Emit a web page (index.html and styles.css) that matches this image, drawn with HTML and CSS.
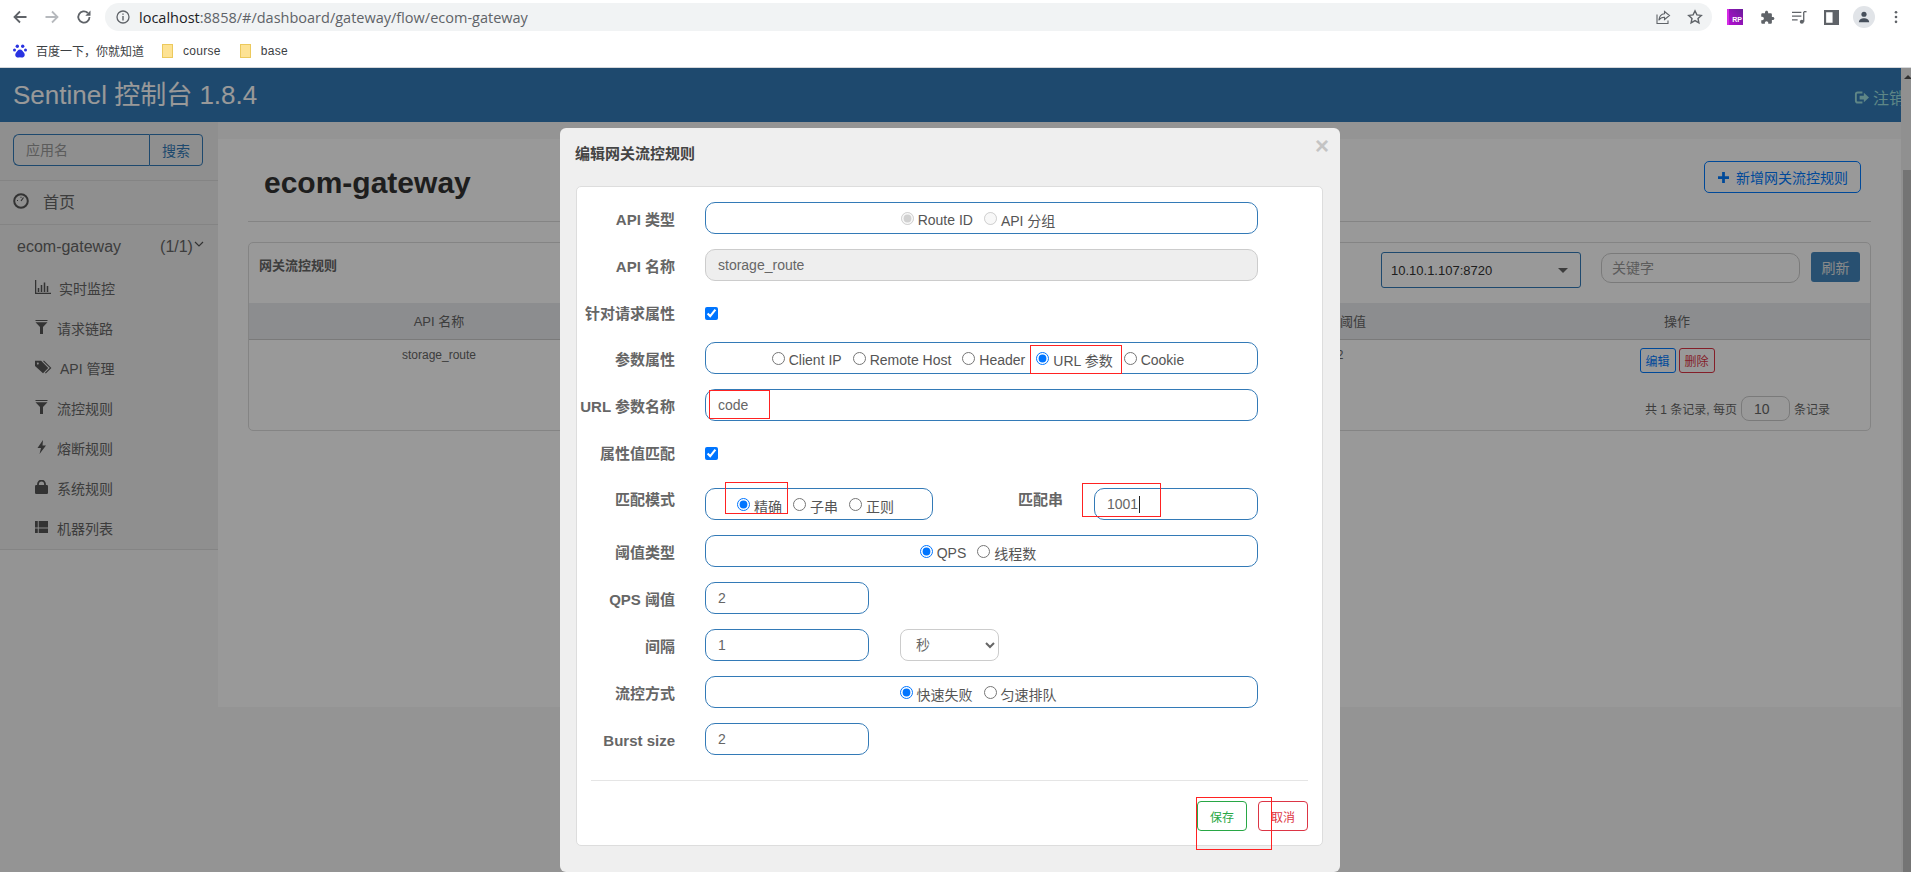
FILE: index.html
```html
<!DOCTYPE html>
<html lang="en">
<head>
    <meta charset="UTF-8">
    <title>Sentinel 控制台</title>
    <link rel="stylesheet" href="styles.css">
</head>
<body>
    <!-- Browser toolbar -->
    <div class="toolbar">
        <svg class="nav-icon" viewBox="0 0 16 16"><path d="M14.5 8H2.5M8 2.5L2.5 8 8 13.5" fill="none" stroke="#5f6368" stroke-width="1.8"/></svg>
        <svg class="nav-icon" viewBox="0 0 16 16"><path d="M1.5 8h12M8 2.5L13.5 8 8 13.5" fill="none" stroke="#b6b9bd" stroke-width="1.8"/></svg>
        <svg class="nav-icon" viewBox="0 0 16 16"><path d="M13.5 8A5.6 5.6 0 1 1 11.8 4" fill="none" stroke="#5f6368" stroke-width="1.8"/><path d="M14.5 1.5v5.2H9.3z" fill="#5f6368"/></svg>
        <div class="address-bar">
            <svg class="info-icon" viewBox="0 0 14 14"><circle cx="7" cy="7" r="6" fill="none" stroke="#5f6368" stroke-width="1.3"/><path d="M6.3 6h1.4v4.5H6.3zM6.3 3.4h1.4v1.4H6.3z" fill="#5f6368"/></svg>
            <span class="url"><span class="url-host">localhost</span>:8858/#/dashboard/gateway/flow/ecom-gateway</span>
            <svg class="bar-icon share-icon" viewBox="0 0 16 16"><path d="M2 5.500v9h11v-3M9.500 2.500l5 4-5 4V8.300C6.500 8.200 5 9.300 3.800 11.200 4.200 7.600 6 5 9.500 4.700z" fill="none" stroke="#5f6368" stroke-width="1.1"/></svg>
            <svg class="bar-icon" viewBox="0 0 16 16"><path d="M8 1.800l1.900 4.100 4.400.5-3.300 3 .9 4.500L8 11.600l-3.900 2.300.9-4.500-3.300-3 4.400-.5z" fill="none" stroke="#5f6368" stroke-width="1.4"/></svg>
        </div>
        <div class="ext-rp"><span>RP</span></div>
        <svg class="ext-icon" viewBox="0 0 24 24"><path d="M20.500 11H19V7c0-1.100-.9-2-2-2h-4V3.500C13 2.120 11.880 1 10.500 1S8 2.120 8 3.500V5H4c-1.100 0-1.990.9-1.990 2v3.800H3.500c1.490 0 2.700 1.210 2.700 2.700s-1.210 2.700-2.700 2.700H2V20c0 1.100.9 2 2 2h3.800v-1.500c0-1.490 1.210-2.700 2.700-2.700 1.490 0 2.700 1.210 2.700 2.700V22H17c1.100 0 2-.9 2-2v-4h1.500c1.380 0 2.500-1.120 2.500-2.500S21.880 11 20.500 11z" fill="#5f6368"/></svg>
        <svg class="ext-icon" viewBox="0 0 16 16"><path d="M0 2.500h10M0 6.500h10M0 10.500h6" stroke="#5f6368" stroke-width="1.300"/><path d="M12.500 2v10.500" stroke="#5f6368" stroke-width="1.400"/><path d="M12.500 1.800h3" stroke="#5f6368" stroke-width="1.400"/><circle cx="10.500" cy="12.500" r="2.200" fill="#5f6368"/></svg>
        <svg class="ext-icon" viewBox="0 0 14 14"><path d="M0 0h14v14H0zM2 2v10h6V2z" fill="#5f6368" fill-rule="evenodd"/></svg>
        <div class="avatar"><svg viewBox="0 0 14 14"><circle cx="7" cy="3.800" r="3" fill="#47505c"/><path d="M1 13c0-3 3-4.500 6-4.500s6 1.500 6 4.500z" fill="#47505c"/></svg></div>
        <svg class="dots" viewBox="0 0 4 16"><circle cx="2" cy="2.500" r="1.500" fill="#5f6368"/><circle cx="2" cy="8" r="1.500" fill="#5f6368"/><circle cx="2" cy="13.500" r="1.500" fill="#5f6368"/></svg>
    </div>

    <!-- Bookmarks -->
    <div class="bookmarks">
        <svg class="baidu-icon" viewBox="0 0 14 14"><circle cx="4.300" cy="2.300" r="1.700" fill="#2932e1"/><circle cx="9.700" cy="2.300" r="1.700" fill="#2932e1"/><circle cx="1.500" cy="6" r="1.500" fill="#2932e1"/><circle cx="12.500" cy="6" r="1.500" fill="#2932e1"/><path d="M7 5.500c2 0 2.500 1.500 4 3.200 1.500 2 .6 4.800-2 4.800-.8 0-1.300-.3-2-.3s-1.200.3-2 .3c-2.600 0-3.500-2.800-2-4.800C4.500 7 5 5.500 7 5.500z" fill="#2932e1"/></svg>
        <span class="bookmark-text baidu-text">百度一下，你就知道</span>
        <span class="folder"></span><span class="bookmark-text course-text">course</span>
        <span class="folder"></span><span class="bookmark-text">base</span>
    </div>

    <div class="page">
        <div class="app">
            <div class="navbar">
                <span class="brand">Sentinel 控制台 1.8.4</span>
                <span class="logout">
                    <svg class="logout-icon" viewBox="0 0 16 16"><path d="M9 1.500H4a3 3 0 0 0-3 3v7a3 3 0 0 0 3 3h5v-2.200H4a1 1 0 0 1-1-1V4.700a1 1 0 0 1 1-1h5z" fill="#9fe0e0"/><path d="M6 6h4.500V3L16 8l-5.500 5v-3H6z" fill="#9fe0e0"/></svg>注销
                </span>
            </div>
            <div class="layout">
                <div class="sidebar">
                    <div class="search-group">
                        <input class="search-input" type="text" placeholder="应用名">
                        <button class="search-btn">搜索</button>
                    </div>
                    <div class="home-link">
                        <svg class="home-icon" viewBox="0 0 16 16"><circle cx="8" cy="8" r="6.800" fill="none" stroke="#555" stroke-width="2"/><path d="M8 8l2.500-3.500M4 7.500h1M8 3.800v1" stroke="#555" stroke-width="1.200"/></svg>
                        <span>首页</span>
                    </div>
                    <div class="app-title">
                        <span>ecom-gateway</span>
                        <span class="app-count">(1/1)</span>
                        <svg class="chevron" viewBox="0 0 10 6"><path d="M1 1l4 4 4-4" fill="none" stroke="#555" stroke-width="1.200"/></svg>
                    </div>
                    <ul class="menu">
                        <li>
                            <svg class="menu-icon" viewBox="0 0 16 14"><path d="M.5 0v13.500H16M3.500 8v4M6.500 5v7M9.500 2.500V12M12.500 6v6" fill="none" stroke="#555" stroke-width="1.500"/></svg>
                            <span>实时监控</span>
                        </li>
                        <li>
                            <svg class="menu-icon funnel" viewBox="0 0 12 14"><path d="M0 0h12v1H0zM0 2.200h12L7.500 7v7h-3V7z" fill="#555"/></svg>
                            <span>请求链路</span>
                        </li>
                        <li>
                            <svg class="menu-icon tags-icon" viewBox="0 0 18 14"><path d="M0 .5h6.500L14 8l-5.500 5.500L0 6zM3 2.300a1 1 0 1 0 .01 0z" fill="#555" fill-rule="evenodd"/><path d="M9 .5l7.500 7.500-5.500 5.500" fill="none" stroke="#555" stroke-width="1.200"/></svg>
                            <span>API 管理</span>
                        </li>
                        <li>
                            <svg class="menu-icon funnel" viewBox="0 0 12 14"><path d="M0 0h12v1H0zM0 2.200h12L7.500 7v7h-3V7z" fill="#555"/></svg>
                            <span>流控规则</span>
                        </li>
                        <li>
                            <svg class="menu-icon funnel" viewBox="0 0 12 14"><path d="M7.500 0L2 8h3.500L4 14l6.500-8.500H7z" fill="#555"/></svg>
                            <span>熔断规则</span>
                        </li>
                        <li>
                            <svg class="menu-icon funnel" viewBox="0 0 13 14"><path d="M3 6V4a3.500 3.500 0 0 1 7 0v2" fill="none" stroke="#555" stroke-width="1.800"/><rect y="5" width="13" height="9" rx="1.200" fill="#555"/></svg>
                            <span>系统规则</span>
                        </li>
                        <li>
                            <svg class="menu-icon funnel" viewBox="0 0 14 13"><path d="M0 0h3v7H0zM4 0h10v7H4zM0 8h3v5H0zM4 8h10v5H4z" fill="#555"/></svg>
                            <span>机器列表</span>
                        </li>
                    </ul>
                </div>
                <div class="main">
                    <div class="main-header">
                        <h1>ecom-gateway</h1>
                        <button class="add-btn">
                            <svg class="plus-icon" viewBox="0 0 12 12"><path d="M4.500 0h3v4.500H12v3H7.500V12h-3V7.500H0v-3h4.500z" fill="#007bff"/></svg>
                            新增网关流控规则
                        </button>
                    </div>
                    <div class="panel">
                        <div class="panel-head">
                            <span class="panel-title">网关流控规则</span>
                            <div class="machine-select"><span>10.10.1.107:8720</span><span class="select-caret"></span></div>
                            <input class="keyword-input" type="text" placeholder="关键字">
                            <button class="refresh-btn">刷新</button>
                        </div>
                        <table class="rule-table">
                            <colgroup>
                                <col class="col-name"><col class="col-type"><col class="col-type"><col class="col-count"><col class="col-ops">
                            </colgroup>
                            <thead>
                                <tr><th>API 名称</th><th></th><th></th><th>单机阈值</th><th>操作</th></tr>
                            </thead>
                            <tbody>
                                <tr>
                                    <td>storage_route</td><td></td><td></td><td>2</td>
                                    <td><button class="mini-btn edit-btn">编辑</button><button class="mini-btn del-btn">删除</button></td>
                                </tr>
                            </tbody>
                        </table>
                        <div class="pager">
                            <span>共 1 条记录, 每页</span>
                            <input class="page-size" type="text" value="10">
                            <span>条记录</span>
                        </div>
                    </div>
                </div>
            </div>
        </div>
        <div class="scrollbar">
            <span class="scroll-arrow"></span>
            <div class="scroll-thumb"></div>
        </div>

        <div class="backdrop"></div>

        <!-- Edit dialog -->
        <div class="modal">
            <div class="modal-head">
                <span class="modal-title">编辑网关流控规则</span>
                <span class="modal-close">×</span>
            </div>
            <div class="modal-card">
                <form class="rule-form">
                    <div class="form-row">
                        <label class="field-label">API 类型</label>
                        <div class="radio-box full">
                            <label class="radio"><input type="radio" name="r1" checked disabled>Route ID</label>
                            <label class="radio"><input type="radio" name="r1" disabled>API 分组</label>
                        </div>
                    </div>
                    <div class="form-row">
                        <label class="field-label">API 名称</label>
                        <input class="text-input full" type="text" value="storage_route" disabled>
                    </div>
                    <div class="form-row check-row">
                        <label class="field-label">针对请求属性</label>
                        <input class="check" type="checkbox" checked>
                    </div>
                    <div class="form-row">
                        <label class="field-label">参数属性</label>
                        <div class="radio-box full">
                            <label class="radio"><input type="radio" name="r2">Client IP</label>
                            <label class="radio"><input type="radio" name="r2">Remote Host</label>
                            <label class="radio"><input type="radio" name="r2">Header</label>
                            <label class="radio"><input type="radio" name="r2" checked>URL 参数</label>
                            <label class="radio"><input type="radio" name="r2">Cookie</label>
                        </div>
                    </div>
                    <div class="form-row">
                        <label class="field-label">URL 参数名称</label>
                        <input class="text-input full" type="text" value="code">
                    </div>
                    <div class="form-row check-row">
                        <label class="field-label">属性值匹配</label>
                        <input class="check" type="checkbox" checked>
                    </div>
                    <div class="form-row match-row">
                        <label class="field-label">匹配模式</label>
                        <div class="radio-box match-mode">
                            <label class="radio"><input type="radio" name="r3" checked>精确</label>
                            <label class="radio"><input type="radio" name="r3">子串</label>
                            <label class="radio"><input type="radio" name="r3">正则</label>
                        </div>
                        <label class="field-label match-label">匹配串</label>
                        <div class="text-input short caret-input">1001<span class="text-caret"></span></div>
                    </div>
                    <div class="form-row">
                        <label class="field-label">阈值类型</label>
                        <div class="radio-box full">
                            <label class="radio"><input type="radio" name="r4" checked>QPS</label>
                            <label class="radio"><input type="radio" name="r4">线程数</label>
                        </div>
                    </div>
                    <div class="form-row">
                        <label class="field-label">QPS 阈值</label>
                        <input class="text-input short" type="text" value="2">
                    </div>
                    <div class="form-row">
                        <label class="field-label">间隔</label>
                        <input class="text-input short" type="text" value="1">
                        <select class="unit-select"><option>秒</option><option>分</option></select>
                    </div>
                    <div class="form-row">
                        <label class="field-label">流控方式</label>
                        <div class="radio-box full">
                            <label class="radio"><input type="radio" name="r5" checked>快速失败</label>
                            <label class="radio"><input type="radio" name="r5">匀速排队</label>
                        </div>
                    </div>
                    <div class="form-row">
                        <label class="field-label">Burst size</label>
                        <input class="text-input short" type="text" value="2">
                    </div>
                </form>
                <div class="modal-foot">
                    <button class="foot-btn save-btn">保存</button>
                    <button class="foot-btn cancel-btn">取消</button>
                </div>
            </div>
        </div>

        <!-- Red annotation boxes drawn over the screenshot -->
        <div class="mark mark-url"></div>
        <div class="mark mark-code"></div>
        <div class="mark mark-exact"></div>
        <div class="mark mark-value"></div>
        <div class="mark mark-save"></div>
    </div>
</body>
</html>
```

FILE: styles.css
```css
* {
    box-sizing: border-box;
}
html, body {
    height: 100%;
}
body {
    margin: 0;
    height: 872px;
    overflow: hidden;
    background: #fff;
    font-family: "Liberation Sans", "Noto Sans CJK SC", sans-serif;
    font-size: 14px;
    color: #666;
}
button, input, select {
    font-family: inherit;
}

/* browser chrome */
.toolbar {
    display: flex;
    align-items: center;
    height: 34px;
    padding-left: 12px;
}
.nav-icon {
    width: 16px;
    height: 16px;
    margin-right: 16px;
}
.address-bar {
    display: flex;
    align-items: center;
    width: 1607px;
    height: 28px;
    margin-left: -3px;
    padding: 0 9px 0 11px;
    background: #f1f3f4;
    border-radius: 14px;
}
.info-icon {
    width: 14px;
    height: 14px;
    margin-right: 9px;
}
.url {
    flex: 1;
    font-family: "Open Sans", sans-serif;
    font-size: 14.5px;
    color: #5f6368;
}
.url-host {
    color: #202124;
}
.bar-icon {
    width: 16px;
    height: 16px;
}
.share-icon {
    margin-right: 16px;
}
.ext-rp {
    display: flex;
    align-items: flex-end;
    justify-content: flex-end;
    width: 16px;
    height: 16px;
    margin-left: 15px;
    padding-right: 1px;
    background: linear-gradient(45deg, #b40fd0, #6a1b9a);
    border-left: 2px solid #d62ae6;
    color: #fff;
    font-size: 7px;
    font-weight: bold;
    line-height: 10px;
}
.ext-icon {
    width: 15px;
    height: 15px;
    margin-left: 17px;
}
.avatar {
    display: flex;
    align-items: center;
    justify-content: center;
    width: 22px;
    height: 22px;
    margin-left: 14px;
    background: #e1e4e8;
    border-radius: 50%;
}
.avatar svg {
    width: 12px;
    height: 12px;
}
.dots {
    width: 4px;
    height: 14px;
    margin-left: 19px;
}
.bookmarks {
    display: flex;
    align-items: center;
    height: 34px;
    padding-left: 13px;
    border-bottom: 1px solid #d5d7da;
}
.baidu-icon {
    width: 14px;
    height: 14px;
    margin-right: 9px;
}
.bookmark-text {
    font-size: 12px;
    color: #3c4043;
    letter-spacing: .3px;
}
.baidu-text {
    letter-spacing: 0;
    margin-right: 18px;
}
.course-text {
    margin-right: 19px;
}
.folder {
    width: 11px;
    height: 14px;
    margin-right: 10px;
    background: #fde293;
    border: 1px solid #ecc95c;
}

/* dashboard underneath the dialog */
.page {
    position: relative;
    display: flex;
    height: 804px;
    overflow: hidden;
    background: #f7f7f7;
}
.app {
    flex: 1;
    min-width: 0;
}
.navbar {
    position: relative;
    display: flex;
    align-items: center;
    justify-content: space-between;
    height: 54px;
    padding-left: 13px;
    background: #337ab7;
    overflow: hidden;
}
.brand {
    margin-top: -5px;
    font-size: 26px;
    color: #fff;
}
.logout {
    display: flex;
    align-items: center;
    flex-shrink: 0;
    width: 47px;
    margin-top: 4px;
    font-size: 16px;
    color: #9fe0e0;
    white-space: nowrap;
}
.logout-icon {
    width: 15px;
    height: 15px;
    margin-right: 4px;
    flex-shrink: 0;
}
.layout {
    display: flex;
    align-items: flex-start;
}
.sidebar {
    width: 218px;
    height: 428px;
    background: #eee;
    border-bottom: 1px solid #ddd;
}
.search-group {
    display: flex;
    height: 59px;
    padding: 12px 15px 15px 13px;
    border-bottom: 1px solid #ddd;
}
.search-input {
    width: 136px;
    height: 32px;
    padding: 0 12px;
    background: transparent;
    border: 1px solid #337ab7;
    border-right: 0;
    border-radius: 6px 0 0 6px;
    font-size: 14px;
}
.search-input::placeholder {
    color: #999;
}
.search-btn {
    width: 54px;
    height: 32px;
    padding: 0;
    background: transparent;
    border: 1px solid #337ab7;
    border-radius: 0 4px 4px 0;
    font-size: 14px;
    color: #337ab7;
}
.home-link {
    display: flex;
    align-items: center;
    height: 44px;
    padding: 0 0 3px 13px;
    border-bottom: 1px solid #ddd;
    font-size: 16px;
}
.home-icon {
    width: 16px;
    height: 16px;
    margin-right: 14px;
}
.app-title {
    display: flex;
    align-items: center;
    height: 43px;
    padding-left: 17px;
    font-size: 16px;
}
.app-count {
    margin-left: 39px;
}
.chevron {
    width: 10px;
    height: 6px;
    margin: -5px 0 0 1px;
}
.menu {
    list-style: none;
    margin: 0;
    padding: 0;
}
.menu li {
    display: flex;
    align-items: center;
    height: 40px;
    padding-left: 35px;
}
.menu-icon {
    width: 16px;
    height: 14px;
    margin: -3px 8px 0 0;
}
.funnel {
    width: 13px;
    margin-right: 9px;
}
.tags-icon {
    width: 17px;
    margin-right: 8px;
}
.main {
    flex: 1;
    height: 568px;
    margin-top: 17px;
    padding: 0 30px;
    background: #fff;
}
.main-header {
    display: flex;
    justify-content: space-between;
    height: 83px;
    border-bottom: 1px solid #ddd;
}
.main-header h1 {
    margin: 26px 0 0 16px;
    font-size: 30px;
    line-height: 36px;
    color: #333;
}
.add-btn {
    display: flex;
    align-items: center;
    height: 32px;
    margin: 22px 10px 0 0;
    width: 157px;
    padding: 0 12px 0 13px;
    background: transparent;
    border: 1px solid #007bff;
    border-radius: 5px;
    font-size: 14px;
    color: #007bff;
    white-space: nowrap;
}
.plus-icon {
    width: 11px;
    height: 11px;
    margin-right: 7px;
    flex-shrink: 0;
}
.panel {
    margin-top: 20px;
    height: 189px;
    border: 1px solid #ddd;
    border-radius: 5px;
}
.panel-head {
    display: flex;
    align-items: flex-start;
    height: 60px;
    padding: 9px 10px 0 10px;
}
.panel-title {
    margin: 3px auto 0 0;
    font-size: 13px;
    font-weight: bold;
}
.machine-select {
    display: flex;
    align-items: center;
    justify-content: space-between;
    width: 200px;
    height: 36px;
    padding: 0 12px 0 9px;
    border: 1px solid #337ab7;
    border-radius: 3px;
    font-size: 13px;
    color: #333;
}
.select-caret {
    width: 0;
    height: 0;
    border-left: 5px solid transparent;
    border-right: 5px solid transparent;
    border-top: 5px solid #666;
}
.keyword-input {
    width: 199px;
    height: 30px;
    margin: 1px 11px 0 20px;
    padding: 0 10px;
    background: transparent;
    border: 1px solid #ccc;
    border-radius: 10px;
    font-size: 14px;
}
.keyword-input::placeholder {
    color: #999;
}
.refresh-btn {
    width: 49px;
    height: 30px;
    padding: 0;
    background: #4486bd;
    border: 0;
    border-radius: 3px;
    font-size: 14px;
    color: #e6e6e6;
}
.rule-table {
    width: 1621px;
    table-layout: fixed;
    border-collapse: collapse;
}
.col-name { width: 380px; }
.col-type { width: 283.5px; }
.col-count { width: 288px; }
.col-ops { width: 386px; }
.rule-table th {
    height: 36px;
    padding: 0;
    background: #e9ebee;
    border-bottom: 1px solid #ccc;
    font-size: 13px;
    font-weight: normal;
}
.rule-table td {
    height: 41px;
    padding: 8px 0 0;
    vertical-align: top;
    text-align: center;
    font-size: 12px;
}
.mini-btn {
    width: 36px;
    height: 25px;
    margin-right: 3px;
    padding: 0;
    background: transparent;
    border: 1px solid;
    border-radius: 3px;
    font-size: 12px;
}
.edit-btn {
    color: #007bff;
}
.del-btn {
    margin-right: 0;
    color: #dc3545;
}
.pager {
    display: flex;
    justify-content: flex-end;
    align-items: center;
    height: 25px;
    margin: 16px 40px 0 0;
    font-size: 12px;
}
.page-size {
    width: 49px;
    height: 25px;
    margin: 0 4px;
    padding: 0 12px;
    background: transparent;
    border: 1px solid #ccc;
    border-radius: 8px;
    font-size: 14px;
    color: #666;
}
.scrollbar {
    position: relative;
    width: 10px;
    background: #f1f1f1;
}
.scroll-arrow {
    display: block;
    width: 0;
    margin: 7px 0 0 3px;
    border-left: 4px solid transparent;
    border-right: 4px solid transparent;
    border-bottom: 4px solid #505050;
}
.scroll-thumb {
    width: 8px;
    height: 800px;
    margin: 91px 0 0 2px;
    background: #c1c1c1;
}
.backdrop {
    position: absolute;
    inset: 0;
    background: rgba(0, 0, 0, .4);
}

/* dialog */
.modal {
    position: absolute;
    left: 560px;
    top: 60px;
    width: 780px;
    height: 744px;
    padding: 0 17px 0 16px;
    background: #efefef;
    border-radius: 6px;
}
.modal-head {
    display: flex;
    justify-content: space-between;
    height: 58px;
    padding-top: 17px;
}
.modal-title {
    margin-left: -1px;
    font-size: 15px;
    font-weight: bold;
    line-height: 18px;
    color: #444;
}
.modal-close {
    margin-right: -6px;
    margin-top: -14px;
    font-size: 24px;
    font-weight: bold;
    line-height: 30px;
    color: #c4c4c4;
}
.modal-card {
    height: 660px;
    background: #fff;
    border: 1px solid #ddd;
    border-radius: 5px;
}
.rule-form {
    padding-top: 15px;
}
.form-row {
    display: flex;
    height: 32px;
    margin-bottom: 15px;
}
.check-row {
    height: 31px;
}
.match-row {
    height: 38px;
}
.field-label {
    flex-shrink: 0;
    width: 98px;
    margin-right: 30px;
    padding-top: 8px;
    text-align: right;
    font-size: 15px;
    font-weight: bold;
    line-height: 20px;
    color: #666;
    white-space: nowrap;
}
.text-input, .radio-box {
    height: 32px;
    border: 1px solid #337ab7;
    border-radius: 10px;
    background: #fff;
}
.text-input {
    padding: 0 12px;
    font-size: 14px;
    color: #666;
}
.text-input:disabled {
    background: #eee;
    border-color: #ccc;
}
.full {
    width: 553px;
}
.short {
    width: 164px;
}
.radio-box {
    display: flex;
    align-items: center;
    justify-content: center;
    padding: 3px 7px 0 0;
    color: #555;
}
.radio {
    display: flex;
    align-items: center;
    margin-right: 11px;
    white-space: nowrap;
}
.radio:last-child {
    margin-right: 0;
}
.radio input {
    width: 13px;
    height: 13px;
    margin: -2px 4px 0 0;
}
.check {
    width: 13px;
    height: 13px;
    margin: 11px 0 0;
}
.match-mode {
    width: 228px;
    margin-top: 6px;
}
.match-label {
    width: 130px;
    margin-right: 31px;
}
.caret-input {
    display: flex;
    align-items: center;
    margin-top: 6px;
}
.text-caret {
    width: 1px;
    height: 17px;
    margin-left: 1px;
    background: #222;
}
.unit-select {
    width: 99px;
    height: 32px;
    margin-left: 31px;
    padding-left: 11px;
    background: #fff;
    border: 1px solid #ccc;
    border-radius: 8px;
    font-size: 14px;
    color: #666;
}
.modal-foot {
    display: flex;
    justify-content: flex-end;
    gap: 11px;
    margin: 25px 14px 0;
    padding-top: 20px;
    border-top: 1px solid #e5e5e5;
}
.foot-btn {
    width: 50px;
    height: 30px;
    padding: 0;
    background: #fff;
    border: 1px solid;
    border-radius: 4px;
    font-size: 12px;
}
.save-btn {
    color: #28a745;
}
.cancel-btn {
    color: #dc3545;
}

/* annotations */
.mark {
    position: absolute;
    border: 1px solid #f22;
}
.mark-url {
    left: 1030px;
    top: 277px;
    width: 92px;
    height: 29px;
}
.mark-code {
    left: 709px;
    top: 322px;
    width: 61px;
    height: 29px;
}
.mark-exact {
    left: 725px;
    top: 414px;
    width: 63px;
    height: 32px;
}
.mark-value {
    left: 1082px;
    top: 415px;
    width: 79px;
    height: 34px;
}
.mark-save {
    left: 1196px;
    top: 729px;
    width: 76px;
    height: 53px;
}
```
